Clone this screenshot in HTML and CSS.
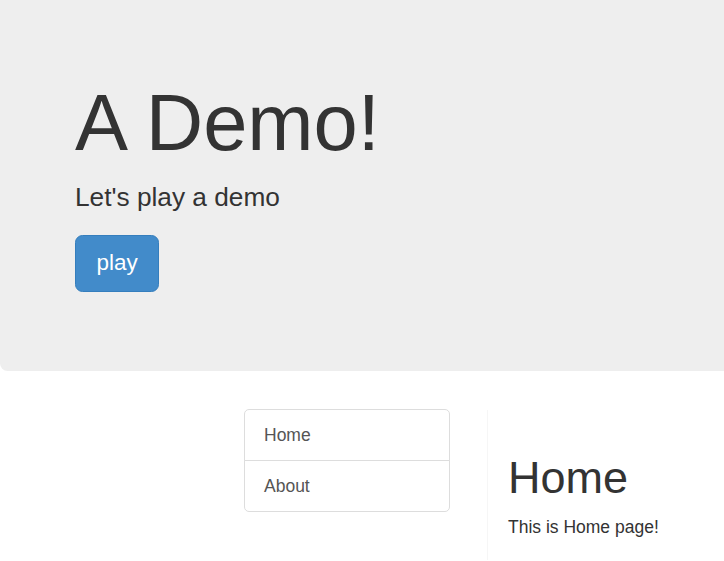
FILE: index.html
```html
<!DOCTYPE html>
<html lang="en">
<head>
<meta charset="utf-8">
<title>A Demo!</title>
<link rel="stylesheet" href="styles.css">
</head>
<body>
  <div class="jumbotron">
    <h1 class="jumbo-title">A Demo!</h1>
    <p class="lead">Let's play a demo</p>
    <p class="actions"><a class="btn btn-primary btn-lg" href="#">play</a></p>
  </div>
  <div class="main">
    <div class="list-group">
      <a class="list-group-item" href="#">Home</a>
      <a class="list-group-item" href="#">About</a>
    </div>
    <div class="panel">
      <h1 class="page-title">Home</h1>
      <p class="page-text">This is Home page!</p>
    </div>
  </div>
</body>
</html>
```

FILE: styles.css
```css
html, body {
  margin: 0;
  padding: 0;
}
body {
  font-family: "Liberation Sans", Arial, Helvetica, sans-serif;
  font-size: 17.5px;
  line-height: 25px;
  color: #333;
  background: #fff;
}
.jumbotron {
  background: #eee;
  padding: 55px 75px 60px;
  border-radius: 0 0 0 7.5px;
  margin-bottom: 38.5px;
}
.jumbo-title {
  margin: 25px 0 12.5px;
  font-size: 79.5px;
  line-height: 86px;
  font-weight: 500;
}
.lead {
  margin: 0 0 18.75px;
  font-size: 26.25px;
  line-height: 37.5px;
  font-weight: 200;
}
.actions {
  margin: 0 0 18.75px;
}
.btn {
  display: inline-block;
  text-decoration: none;
  font-size: 22.5px;
  line-height: 30px;
  padding: 12.5px 20.5px;
  border-radius: 7.5px;
  border: 1.25px solid #357ebd;
  background: #428bca;
  color: #fff;
}
.main {
  display: flex;
  align-items: flex-start;
  padding-left: 244px;
  gap: 37px;
}
.list-group {
  width: 206px;
  display: flex;
  flex-direction: column;
}
.list-group-item {
  display: block;
  padding: 12.5px 19px;
  line-height: 25px;
  color: #555;
  text-decoration: none;
  border: 1px solid #ddd;
  margin-bottom: -1px;
}
.list-group-item:first-child {
  border-radius: 5px 5px 0 0;
}
.list-group-item:last-child {
  border-radius: 0 0 5px 5px;
  margin-bottom: 0;
}
.panel {
  flex: 1;
  margin-top: 1px;
  padding: 18px 20px 20px;
  border-left: 1px solid #f6f6f6;
}
.page-title {
  margin: 25px 0 12.5px;
  font-size: 45px;
  line-height: 1.1;
  font-weight: 500;
}
.page-text {
  margin: 0;
}
```
